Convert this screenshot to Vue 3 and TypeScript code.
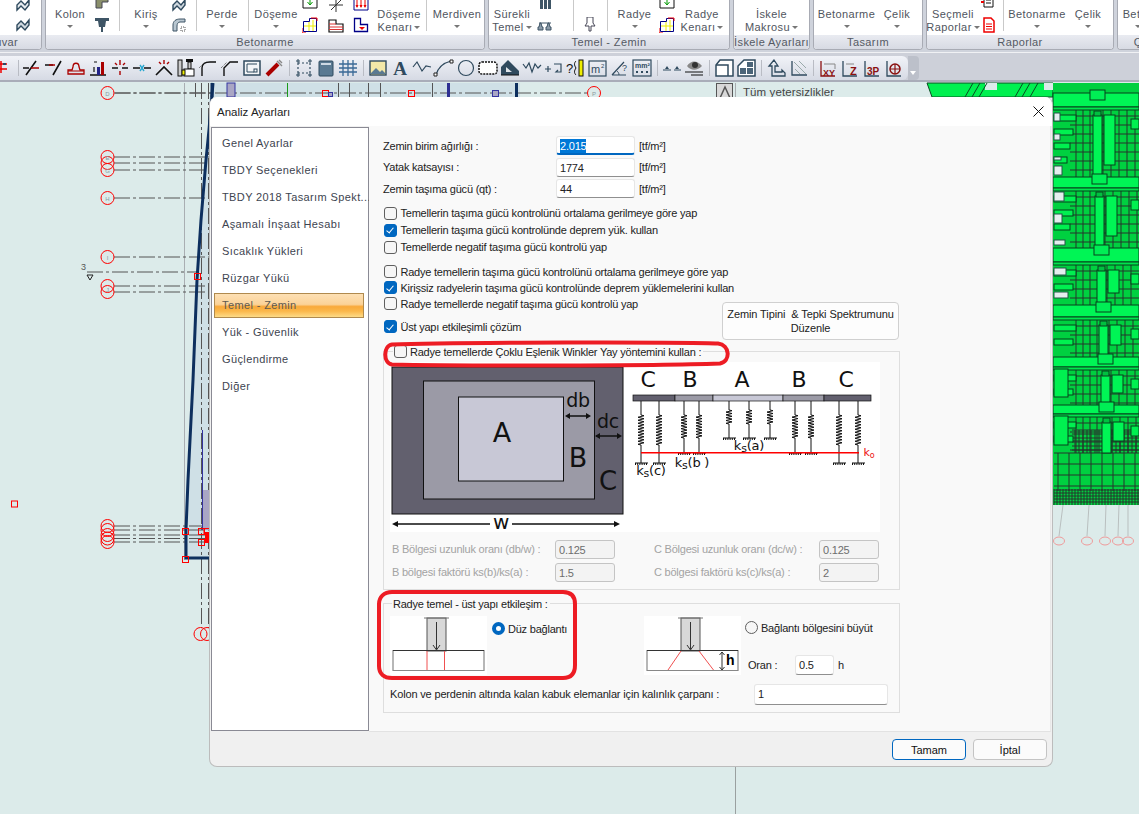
<template>
  <div class="app">
    <!-- ribbon -->
    <div class="ribbon">
      <div v-for="g in groups" :key="g.title" class="group" :style="{ width: g.w + 'px' }">
        <div class="group-body">
          <template v-for="(it, i) in g.items" :key="i">
            <div v-if="it.kind === 'sep'" class="rb-sep" :style="{ width: it.w + 'px' }"></div>
            <div v-else-if="it.kind === 'col'" class="rb-col" :style="{ width: it.w + 'px' }">
              <svg v-for="ic in it.icons" :key="ic" width="16" height="16" viewBox="0 0 16 16" v-html="ribbonIcons[ic]"></svg>
            </div>
            <div v-else class="rb-btn" :style="{ width: it.w + 'px' }">
              <span>{{ it.l1 }}</span>
              <span v-if="it.l2">{{ it.l2 }}<i class="caret inline"></i></span>
              <i v-else class="caret"></i>
            </div>
          </template>
        </div>
        <div class="group-title">{{ g.title }}</div>
      </div>
    </div>

    <!-- toolbar -->
    <div class="toolbar-row">
      <div class="toolbar">
        <template v-for="(t, i) in tools" :key="i">
          <span v-if="t === '|'" class="tb-sep"></span>
          <svg v-else class="tb-icon" width="22" height="20" viewBox="0 0 22 20" v-html="t"></svg>
        </template>
      </div>
      <div class="tb-more"><i></i></div>
    </div>

    <!-- drawing area -->
    <div class="canvas">
      <svg class="plan" width="1139" height="732" viewBox="0 82 1139 732">
        <polygon points="213,83 209,130 206,160 201,220 197,280 193,380 188,480 186,530 186,558 209,558 209,97 520,97 520,83" fill="#cfe0e6" />
        <line x1="184.5" y1="83" x2="184.5" y2="560" stroke="#a9aeb2" />
        <g stroke="#555" stroke-dasharray="16 3 3 3" fill="none">
          <line v-for="y in axisY" :key="y" x1="114" :y1="y" x2="212" :y2="y" />
          <line x1="115" y1="93" x2="588" y2="93" />
          <line x1="87" y1="272" x2="198" y2="272" />
          <line x1="201.5" y1="83" x2="201.5" y2="628" />
          <line x1="208.5" y1="83" x2="208.5" y2="628" />
        </g>
        <g fill="none" stroke="#f00">
          <circle v-for="y in axisY" :key="y" cx="107.5" :cy="y" r="6.5" />
          <circle cx="594" cy="93" r="6.5" />
          <circle cx="200.5" cy="634" r="6.5" />
          <circle cx="207" cy="634" r="6.5" />
        </g>
        <g class="axis-txt">
          <text v-for="a in axisLabels" :key="a.t" x="107.5" :y="a.y + 2.5">{{ a.t }}</text>
          <text x="594" y="95.5">P</text>
        </g>
        <text x="81" y="270" class="lvl">3</text>
        <path d="M87 275h6l-3 5z" fill="none" stroke="#222" />
        <polyline points="213,83 209,130 206,160 201,220 197,280 193,380 188,480 186,530 186,558 209,558" fill="none" stroke="#0d2f5e" stroke-width="3" />
        <rect x="203" y="490" width="6" height="40" fill="#a9a6c4" />
        <line x1="202.5" y1="430" x2="202.5" y2="530" stroke="#3534a0" />
        <rect x="205" y="532" width="4" height="11" fill="#f00" />
        <g fill="none" stroke="#f00" stroke-width="1">
          <rect v-for="s in redSquares" :key="s[0] + '-' + s[1]" :x="s[0] - 3" :y="s[1] - 3" width="6" height="6" />
        </g>
        <!-- strip above the dialog -->
        <rect x="210.5" y="83" width="3" height="14" fill="#0d2f5e" />
        <rect x="227" y="83" width="8" height="14" fill="#a9a6c4" stroke="#3534a0" />
        <rect x="287" y="83" width="1" height="14" fill="#1a9a1a" />
        <line v-for="x in stripX" :key="x" :x1="x" y1="83" :x2="x" y2="97" stroke="#555" />
        <rect x="322.5" y="90.5" width="6" height="6" fill="none" stroke="#f00" />
        <rect x="408.5" y="90.5" width="6" height="6" fill="none" stroke="#f00" />
        <rect x="328.5" y="92.5" width="4" height="4" fill="#a9a6c4" stroke="#3534a0" />
        <rect x="447" y="83" width="3" height="14" fill="#2e3092" />
        <rect x="492.5" y="90.5" width="6" height="6" fill="#a9a6c4" stroke="#3534a0" />
        <rect x="515" y="83" width="3" height="14" fill="#0d2f5e" />
        <rect x="11.5" y="501" width="6" height="6" fill="none" stroke="#f00" />
        <line x1="735.5" y1="767" x2="735.5" y2="814" stroke="#9aa0a0" />
        <!-- tall structure on the right -->
        <g>
          <polygon points="927,83 1053,83 1053,97 932,97" fill="#00f050" stroke="#0a4a22" />
          <rect x="985" y="83" width="12" height="7" fill="#dcebea" />
          <rect x="1044" y="83" width="9" height="7" fill="#dcebea" />
          <line v-for="x in [965, 972, 979, 1015, 1022, 1030]" :key="x" :x1="x" y1="97" :x2="x + 8" y2="83" stroke="#0a4a22" />
          <rect x="1053" y="83" width="86" height="422" fill="#00d040" />
          <g stroke="#26352c" stroke-width="1">
            <line v-for="l in meshLines" :key="l.k" :x1="l.x1" :y1="l.y1" :x2="l.x2" :y2="l.y2" />
          </g>
          <rect v-for="b in solids" :key="b.k" :x="b.x" :y="b.y" :width="b.w" :height="b.h" :fill="b.f" stroke="#07401d" />
          <rect v-for="h in holes" :key="h[1]" x="1054" :y="h[1]" :width="h[0]" :height="h[2]" fill="#e4eeee" stroke="#254" />
        </g>
        <g stroke="#b9bfbf">
          <line x1="1063" y1="505" x2="1059" y2="536" />
          <line x1="1089" y1="505" x2="1087" y2="536" />
          <line x1="1106" y1="505" x2="1105" y2="536" />
          <line x1="1119" y1="505" x2="1118" y2="536" />
          <line x1="1128" y1="505" x2="1128" y2="536" />
        </g>
        <g fill="none" stroke="#ef9a9a">
          <ellipse v-for="x in [1059, 1087, 1105, 1118, 1128]" :key="x" :cx="x" cy="541" rx="5.5" ry="4" />
        </g>
      </svg>
      <div class="up-box"><svg width="16" height="14" viewBox="0 0 16 14"><path d="M3 14 8 3l5 11" fill="none" stroke="#555" stroke-width="1.5" /></svg></div>
      <div class="side-title">Tüm yetersizlikler</div>
    </div>

    <!-- dialog -->
    <div class="dialog">
      <div class="dlg-title">
        <span>Analiz Ayarları</span>
        <svg width="11" height="11" viewBox="0 0 11 11"><path d="M.5.5l10 10M10.5.5l-10 10" stroke="#111" stroke-width="1" /></svg>
      </div>
      <div class="dlg-body">
        <ul class="nav">
          <li v-for="n in navItems" :key="n" :class="{ active: n === 'Temel - Zemin' }">{{ n }}</li>
        </ul>
        <div class="pane">
          <div v-for="(r, i) in soilRows" :key="r.label" class="soil-row">
            <span class="soil-label">{{ r.label }}</span>
            <div class="field soil-field" :class="{ focused: i === 0 }">
              <span :class="{ sel: i === 0 }">{{ r.value }}</span>
            </div>
            <span>[tf/m²]</span>
          </div>

          <div class="checks first">
            <label v-for="c in checks1" :key="c.t" class="check tall"><i class="box" :class="{ on: c.on }"></i>{{ c.t }}</label>
          </div>
          <div class="checks second">
            <label v-for="c in checks2" :key="c.t" class="check"><i class="box" :class="{ on: c.on }"></i>{{ c.t }}</label>
          </div>

          <div class="with-button">
            <div>
              <label class="check"><i class="box"></i>Radye temellerde negatif taşıma gücü kontrolü yap</label>
              <label class="check last"><i class="box on"></i>Üst yapı etkileşimli çözüm</label>
            </div>
            <button class="spectrum">Zemin Tipini &nbsp;&amp; Tepki Spektrumunu<br />Düzenle</button>
          </div>

          <div class="frame winkler">
            <div class="legend"><i class="box"></i>Radye temellerde Çoklu Eşlenik Winkler Yay yöntemini kullan :</div>
            <svg class="zones" width="490" height="170" viewBox="391 362 490 170">
              <rect x="391" y="362" width="490" height="170" fill="#fff" />
              <rect x="393" y="367" width="231" height="147" fill="#62606e" stroke="#111" />
              <rect x="424.5" y="381" width="171" height="118" fill="#9b9aa6" stroke="#111" />
              <rect x="459.5" y="397" width="105" height="84" fill="#c8c8d6" stroke="#111" />
              <g class="dia" fill="#111">
                <text x="503" y="442" font-size="27">A</text>
                <text x="579" y="467" font-size="27">B</text>
                <text x="609" y="490" font-size="26">C</text>
                <text x="579" y="407" font-size="19">db</text>
                <text x="609" y="428" font-size="19">dc</text>
                <text x="502" y="529" font-size="20">w</text>
                <text x="649" y="387" font-size="22">C</text>
                <text x="691" y="387" font-size="22">B</text>
                <text x="743" y="387" font-size="22">A</text>
                <text x="800" y="387" font-size="22">B</text>
                <text x="847" y="387" font-size="22">C</text>
                <text x="652" y="475" font-size="13">k<tspan font-size="11" dy="2">s</tspan><tspan dy="-2">(c)</tspan></text>
                <text x="693" y="467" font-size="13">k<tspan font-size="11" dy="2">s</tspan><tspan dy="-2">(b )</tspan></text>
                <text x="750" y="450" font-size="13">k<tspan font-size="11" dy="2">s</tspan><tspan dy="-2">(a)</tspan></text>
                <text x="870" y="456" font-size="11" fill="#e11">k<tspan font-size="8" dy="2">o</tspan></text>
              </g>
              <g stroke="#111" stroke-width="1.5" fill="#111">
                <path d="M568 416h22M597 436h24M398 524h93M513 524h106" fill="none" />
                <path d="M566 416l5-3v6zM592 416l-5-3v6zM596 436l5-3v6zM623 436l-5-3v6zM393 524l6-3v6zM621 524l-6-3v6z" stroke="none" />
              </g>
              <rect x="634" y="395" width="42" height="6" fill="#62606e" stroke="#111" stroke-width=".7" />
              <rect x="676" y="395" width="38" height="6" fill="#9b9aa6" stroke="#111" stroke-width=".7" />
              <rect x="714" y="395" width="70" height="6" fill="#c8c8d6" stroke="#111" stroke-width=".7" />
              <rect x="784" y="395" width="41" height="6" fill="#9b9aa6" stroke="#111" stroke-width=".7" />
              <rect x="825" y="395" width="47" height="6" fill="#62606e" stroke="#111" stroke-width=".7" />
              <g fill="none" stroke="#111" stroke-width="1">
                <path v-for="s in springs" :key="s.x" :d="s.d" />
              </g>
              <rect x="642" y="452" width="218" height="1.5" fill="#f00" />
            </svg>
            <div class="ratio-grid">
              <div v-for="r in ratios" :key="r.label" class="ratio">
                <span class="ratio-label">{{ r.label }}</span>
                <div class="field off">{{ r.value }}</div>
              </div>
            </div>
          </div>

          <div class="frame interaction">
            <div class="legend plain">Radye temel - üst yapı etkileşim :</div>
            <div class="link-row">
              <svg width="97" height="59" viewBox="391 616 97 59">
                <rect x="391" y="616" width="97" height="59" fill="#fff" />
                <rect x="428" y="618" width="19" height="33" fill="#d8d8d8" stroke="#555" />
                <line x1="425" y1="618" x2="450" y2="618" stroke="#777" />
                <path d="M437.5 622v27M434 645l3.5 5 3.5-5" fill="none" stroke="#333" />
                <path d="M394 650v21M485 650v21M394 670.5h91" fill="none" stroke="#888" stroke-width="1.2" />
                <line x1="394" y1="650.5" x2="485" y2="650.5" stroke="#333" stroke-width="1.2" />
                <path d="M428 651v19M445.5 651v19" stroke="#f05050" />
              </svg>
              <label class="radio-row first"><i class="radio on"></i>Düz bağlantı</label>
              <svg class="pic2" width="97" height="59" viewBox="645 616 97 59">
                <rect x="645" y="616" width="97" height="59" fill="#fff" />
                <rect x="682" y="618" width="19" height="33" fill="#d8d8d8" stroke="#555" />
                <line x1="679" y1="618" x2="704" y2="618" stroke="#777" />
                <path d="M691.5 622v27M688 645l3.5 5 3.5-5" fill="none" stroke="#333" />
                <path d="M648 650v21M739 650v21M648 670.5h91" fill="none" stroke="#888" stroke-width="1.2" />
                <line x1="648" y1="650.5" x2="739" y2="650.5" stroke="#333" stroke-width="1.2" />
                <path d="M682 651l-13 19M700 651l14.5 19" stroke="#f05050" fill="none" />
                <path d="M723 652v18M720.5 655l2.5-3 2.5 3M720.5 667l2.5 3 2.5-3" stroke="#333" fill="none" />
                <text x="727" y="665" class="h-mark">h</text>
              </svg>
              <div class="link-right">
                <label class="radio-row"><i class="radio"></i>Bağlantı bölgesini büyüt</label>
                <div class="oran">
                  <span class="oran-label">Oran :</span>
                  <div class="field oran-field">0.5</div>
                  <span>h</span>
                </div>
              </div>
            </div>
            <div class="thick-row">
              <span>Kolon ve perdenin altında kalan kabuk elemanlar için kalınlık çarpanı :</span>
              <div class="field thick-field">1</div>
            </div>
          </div>
        </div>
      </div>
      <div class="dlg-foot">
        <button class="btn primary">Tamam</button>
        <button class="btn">İptal</button>
      </div>
    </div>

    <!-- red marks drawn over the screenshot -->
    <svg class="marks" width="1139" height="814" viewBox="0 0 1139 814">
      <g fill="none" stroke="#ed1c24" stroke-width="4">
        <path d="M392 344.5C450 342 690 342 718 343.5 730 345 731 361 720 363.5 650 366 450 366 392 364.5 383 363 383 346 392 344.5Z" />
        <path d="M392 592H563C571 592 575 596 575 604V665C575 674 571 678 563 678H392C384 678 379 674 379 666V604C379 597 384 592 392 592Z" />
      </g>
    </svg>
  </div>
</template>

<script setup lang="ts">
type RibbonItem =
  | { kind: "sep"; w: number }
  | { kind: "col"; w: number; icons: string[] }
  | { kind: "btn"; w: number; l1: string; l2?: string };

interface RibbonGroup {
  title: string;
  w: number;
  items: RibbonItem[];
}

const btn = (w: number, l1: string, l2?: string): RibbonItem => ({ kind: "btn", w, l1, l2 });
const sep = (w: number): RibbonItem => ({ kind: "sep", w });
const col = (w: number, ...icons: string[]): RibbonItem => ({ kind: "col", w, icons });

const ribbonIcons: Record<string, string> = {
  wave: '<path d="M2 13V8l4-4 4 4 4-5v5l-4 5-4-4-4 4z" fill="#cfd8df" stroke="#2f4a5e" stroke-width="1.4"/>',
  wave2: '<path d="M2 13V8l4-4 4 4 4-5v5l-4 5-4-4-4 4z" fill="#e6ebef" stroke="#2f4a5e" stroke-width="1.4"/>',
  block: '<path d="M2 0h12v5H8v6H2z" fill="#8a8f6b" stroke="#445"/>',
  funnel: '<path d="M1 1h14v3h-3l-1 6H9v5H7v-5H5L4 4H1z" fill="#3e5566"/>',
  curve: '<path d="M2 14V8c0-4 3-6 7-6h5v3H9c-2 0-3 2-3 4v5z" fill="#b8c6d0" stroke="#3e5566"/><path d="M10 10h4v4h-4z" fill="none" stroke="#555" stroke-dasharray="1 1"/>',
  boxArrow: '<path d="M1 0h14v11H1z" fill="#fff" stroke="#111"/><path d="M8 1v6M5.5 5 8 8l2.5-3" stroke="#090" fill="none"/>',
  lYellow: '<path d="M1.5 4.5h6v-3h7v13h-13z" fill="#fff" stroke="#008"/><path d="M2 9h12M7 5v9M11 3v11" stroke="#ee0"/><path d="M9 1h6v3M0 11v5h4" stroke="#e00" fill="none"/>',
  cross: '<path d="M1 8h14M8 0v15M3 13 13 3" stroke="#333" fill="none"/>',
  steps: '<path d="M1 15V3h7v4h7v8z" fill="#fff" stroke="#111" stroke-width="1.2"/><path d="M1 7h7M1 10h14M1 12.5h14" stroke="#d33"/>',
  arrowsRed: '<path d="M1 0h14v13H1z" fill="#fff" stroke="#008"/><path d="M4 2v8M8 2v8M12 2v8" stroke="#e00"/><path d="M2.5 8 4 11l1.5-3M6.5 8 8 11l1.5-3M10.5 8l1.5 3 1.5-3" fill="#e00"/>',
  lRed: '<path d="M1.5 1.5h6v6h7v7h-13z" fill="#fff" stroke="#008" stroke-width="1.3"/><path d="M6 10h6l-3 3z" fill="#e00"/>',
  bars: '<path d="M3 0h3v12H3zM7 0h3v12H7zM11 0h3v12h-3z" fill="#3e5566"/>',
  pads: '<path d="M1 13h5V10H5L4 6H3l-1 4H1zM9 13h5V10h-1l-1-4h-1l-1 4H9z" fill="#8a9aa8" stroke="#3e5566"/><path d="M2 6h12" stroke="#3e5566"/>',
  pin: '<path d="M5 0h6v6l2 3H9v5H7V9H3l2-3z" fill="#fff" stroke="#445"/>',
  docGrid: '<path d="M3 0h9v10H3z" fill="#fff" stroke="#111"/><path d="M5 3h5M5 6h5" stroke="#111"/><path d="M0 2h3M0 5h3" stroke="#e00" stroke-width="2"/>',
  docRed: '<path d="M3 1h7l3 3v11H3z" fill="#fff" stroke="#e00" stroke-width="1.5"/><path d="M5 7h6M5 9.5h6M5 12h6" stroke="#e00"/>',
};

const groups: RibbonGroup[] = [
  // this group starts left of the window, only its end shows
  { title: "Duvar", w: 79, items: [col(118, "wave2", "wave")] },
  {
    title: "Betonarme",
    w: 440,
    items: [
      btn(48, "Kolon"), col(16, "block", "funnel"), sep(9),
      btn(52, "Kiriş"), col(14, "wave", "curve"), sep(10),
      btn(50, "Perde"), sep(1),
      btn(54, "Döşeme"), col(14, "boxArrow", "lYellow"), col(38, "cross", "steps"), col(12, "arrowsRed", "lRed"),
      col(6), btn(52, "Döşeme", "Kenarı"), sep(1),
      btn(60, "Merdiven"),
    ],
  },
  {
    title: "Temel - Zemin",
    w: 242,
    items: [
      btn(46, "Sürekli", "Temel"), col(20, "bars", "pads"), sep(18),
      col(32, "pin"), sep(1),
      btn(53, "Radye"), col(12, "boxArrow", "lYellow"), btn(58, "Radye", "Kenarı"),
    ],
  },
  { title: "İskele Ayarları", w: 77, items: [btn(75, "İskele", "Makrosu")] },
  { title: "Tasarım", w: 110, items: [btn(65, "Betonarme"), btn(36, "Çelik")] },
  {
    title: "Raporlar",
    w: 188,
    items: [
      btn(52, "Seçmeli", "Raporlar"), col(20, "docGrid", "docRed"), sep(4),
      btn(66, "Betonarme"), btn(36, "Çelik"),
    ],
  },
  { title: "Çelik", w: 60, items: [btn(40, "Beton")] },
];

const L = (d: string, c = "#111", w = 1.2) => `<path d="${d}" fill="none" stroke="${c}" stroke-width="${w}"/>`;

const tools: string[] = [
  L("M3 3v12M7 3v12M1 6h12M1 11h12", "#e00", 1.5) + L("M1 6h3M9 6h3", "#2a4a66", 2),
  "|",
  L("M5 17 15 3M2 10h6", "#111", 1.6) + L("M10 10h8", "#a00", 1.6),
  L("M10 17 18 3M2 7h8", "#111", 1.6) + L("M6 7h6", "#a00", 1.6),
  L("M3 16h16v-4h-4l-1-3c0-5-6-5-6 0l-1 3H3z", "#a00", 1.3) + L("M3 13h16", "#a00", 1),
  L("M3 17h16", "#111", 1.5) + '<rect x="14" y="4" width="3" height="13" fill="#a00"/><rect x="10" y="9" width="3" height="8" fill="#228"/>' + L("M7 9v5M7 4h3", "#111", 1.2),
  L("M11 2v5M11 13v4M6 5l2 2M16 5l-2 2", "#a00", 1.4) + L("M3 10h6M13 10h6", "#111", 1.6),
  L("M2 10h7M13 10h7", "#111", 1.5) + L("M9 7l4 6M13 7l-4 6", "#2aa8d0", 1.4),
  L("M3 17 11 9l8 8", "#111", 1.6) + L("M11 6V2M6 4l2 2M16 4l-2 2", "#a00", 1.4),
  '<rect x="3" y="2" width="4" height="16" fill="#ccc" stroke="#111"/><rect x="11" y="1" width="7" height="3" fill="#111"/><rect x="13" y="4" width="3" height="7" fill="#ccc" stroke="#111"/><rect x="9" y="11" width="10" height="7" fill="#fff" stroke="#111"/><rect x="7" y="12" width="3" height="5" fill="#ee0" stroke="#111"/>',
  L("M5 18V10c0-4 3-6 8-6h6", "#111", 1.4) + '<path d="M2 10 8 4" stroke="#555" stroke-dasharray="1 1"/>',
  L("M5 18V10l6-6h8", "#111", 1.4) + '<path d="M2 10 8 4" stroke="#555" stroke-dasharray="1 1"/>',
  '<rect x="3" y="3" width="16" height="14" fill="#f4f6f8" stroke="#2f4a5e" stroke-width="1.5"/><rect x="13" y="11" width="3" height="3" fill="none" stroke="#2f4a5e"/><path d="M6 6v8h7M6 6h10" stroke="#2f4a5e" fill="none"/>',
  L("M4 17 15 6", "#a00", 4) + L("M14 3l5 5M16 2l3 3", "#888", 1.4),
  "|",
  '<path d="M5 5h12M5 15h12M5 5v10M17 5v10" fill="none" stroke="#2f4a5e" stroke-dasharray="2 2" stroke-width="1.2"/>' + L("M3 3h4M5 1v4M15 3h4M17 1v4M3 17h4M5 15v4M15 17h4M17 15v4", "#2f4a5e", 1),
  '<rect x="4" y="3" width="14" height="15" rx="1" fill="#5a7a92" stroke="#2f4a5e"/><rect x="6" y="5" width="10" height="2" fill="#cdd9e3"/>',
  L("M6 2v16M11 2v16M16 2v16M2 6h18M2 10h18M2 14h18", "#3a6a96", 1.3),
  "|",
  '<rect x="3" y="3" width="16" height="14" fill="#f3e8a8" stroke="#2f4a5e" stroke-width="1.4"/><path d="M3 16 9 10l4 4 2-2 4 4z" fill="#5a7a92"/>',
  '<text x="11" y="17" text-anchor="middle" font-family="Liberation Serif,serif" font-weight="700" font-size="19" fill="#2f4a5e">A</text>',
  L("M2 9 6 4l5 9 4-5 5 1", "#2f4a5e", 1.2),
  L("M3 17C5 9 10 5 18 3", "#2f4a5e", 1.2) + '<path d="M1 15h3v3H1zM17 2h3v3h-3z" fill="#fff" stroke="#222"/>',
  '<circle cx="11" cy="10" r="7.5" fill="none" stroke="#2f4a5e" stroke-width="1.2"/>',
  '<path d="M5 4h12c2 0 3 2 3 3v6c0 2-1 3-3 3H5c-2 0-3-1-3-3V7c0-1 1-3 3-3z" fill="#fff" stroke="#111" stroke-width="1.5" stroke-dasharray="2 1"/>',
  '<path d="M2 17V9l7-7 11 11v4z" fill="#2f4a5e"/><path d="M7 14V9l6 5z" fill="#dfe5ea"/><path d="M2 17h18" stroke="#111"/>',
  L("M2 6l3 4 3-5 3 9 3-8 3 4 3-3", "#2f4a5e", 1.2),
  L("M2 11h6M5 8v6M11 6h7v8h-5l2-2", "#2f4a5e", 1.2),
  '<text x="1" y="15" font-family="Liberation Sans,sans-serif" font-size="13" fill="#111">?</text>' + L("M11 3c-2 2-2 4 0 7-2 3-2 5 0 7", "#111", 1) + '<rect x="14" y="2" width="4" height="16" fill="#ee0" stroke="#111"/>',
  '<rect x="2" y="3" width="17" height="15" fill="none" stroke="#2f4a5e" stroke-width="1.2"/><text x="4" y="15" font-family="Liberation Sans,sans-serif" font-size="11" fill="#2f4a5e">m</text><text x="14" y="10" font-family="Liberation Sans,sans-serif" font-size="6" fill="#2f4a5e">2</text>',
  L("M3 17 15 4M3 17h14", "#2f4a5e", 1.2) + L("M10 17c0-2-1-3-2-4", "#2f4a5e", 1) + '<text x="13" y="13" font-family="Liberation Sans,sans-serif" font-size="9" fill="#2f4a5e">?</text>',
  '<rect x="2" y="2" width="18" height="16" fill="none" stroke="#2f4a5e" stroke-width="1.2"/><text x="4" y="10" font-family="Liberation Sans,sans-serif" font-weight="700" font-size="7" fill="#2f4a5e">mm²</text><path d="M5 14h2M10 14h2M15 14h2" stroke="#2f4a5e" stroke-width="2"/>',
  "|",
  L("M2 12h8M13 12h7", "#2f4a5e", 1.2) + '<path d="M4 11l2-3 2 3zM14 11l2-3 2 3z" fill="#2f4a5e"/>',
  '<path d="M4 8c4-6 10-6 15 0-5 5-11 5-15 0z" fill="#888"/><circle cx="12" cy="7" r="3" fill="#333"/>' + L("M2 14h18", "#111", 1.2) + L("M8 17h12", "#111", 1.2),
  "|",
  '<path d="M7 2h13v16H3V7z" fill="#fff" stroke="#2f4a5e" stroke-width="1.5"/><path d="M3 7h12v11" fill="none" stroke="#2f4a5e" stroke-width="1.5"/>',
  '<path d="M3 8 9 2h11v16H3z" fill="#fff" stroke="#2f4a5e" stroke-width="1.5"/><rect x="5" y="10" width="6" height="6" fill="#4a6478"/><rect x="12" y="10" width="6" height="6" fill="#4a6478"/><rect x="12" y="4" width="6" height="5" fill="#4a6478"/>',
  "|",
  L("M9 2 4 8h3v10h13v-3l-3-3v2h-7V8h3z", "#2f4a5e", 1.3),
  L("M5 3v14h15", "#2f4a5e", 1.3) + L("M7 4l12 12M12 3l7 7M8 11l5 5", "#9aa", 1),
  "|",
  L("M4 3v15h14", "#8a1010", 1.3) + '<text x="6" y="18" font-family="Liberation Sans,sans-serif" font-weight="700" font-size="9" fill="#8a1010">XY</text>' + L("M7 6h11v5", "#888", 1),
  L("M4 3v15h14", "#2f4a5e", 1.3) + '<text x="11" y="17" font-family="Liberation Sans,sans-serif" font-weight="700" font-size="11" fill="#8a1010">Z</text>' + L("M7 6h8", "#888", 1),
  L("M4 3v15h14", "#2f4a5e", 1.3) + '<text x="6" y="17" font-family="Liberation Sans,sans-serif" font-weight="700" font-size="10" fill="#8a1010">3P</text>',
  L("M4 3v15h14", "#2f4a5e", 1.3) + '<circle cx="12" cy="11" r="5" fill="none" stroke="#8a1010" stroke-width="1.5"/>' + L("M7 11h10M12 6v10", "#8a1010", 1.2),
];

const axisY = [93, 157, 163, 170, 198, 257, 286, 292, 526, 530, 535, 538.5, 542];
const axisLabels = [
  { t: "D", y: 93 },
  { t: "E", y: 157 },
  { t: "G", y: 170 },
  { t: "H", y: 198 },
  { t: "I", y: 257 },
  { t: "J", y: 289 },
];
const redSquares = [
  [197.5, 276.5],
  [185.5, 531.5],
  [185.5, 559.5],
  [201.5, 531.5],
  [201.5, 542.5],
  [207, 531.5],
];
const stripX = [195.5, 201.5, 208.5, 338.5, 349.5, 368.5, 380.5, 432.5];

// the green frame is repetitive, so it is generated floor by floor
const floors = [
  { top: 93, bottom: 107, cx: 1097 },
  { top: 177, bottom: 188, cx: 1099 },
  { top: 248, bottom: 262, cx: 1101 },
  { top: 305, bottom: 317, cx: 1103 },
  { top: 357, bottom: 367, cx: 1105 },
  { top: 405, bottom: 414, cx: 1106 },
];
const meshLines: { k: string; x1: number; y1: number; x2: number; y2: number }[] = [];
const solids: { k: string; x: number; y: number; w: number; h: number; f: string }[] = [];
const addLine = (x1: number, y1: number, x2: number, y2: number) =>
  meshLines.push({ k: `${x1}-${y1}-${x2}-${y2}`, x1, y1, x2, y2 });

floors.forEach((f, i) => {
  const next = i < floors.length - 1 ? floors[i + 1].top : 453;
  const h = next - f.bottom;
  for (let x = 1076; x < f.cx - 5; x += 7) addLine(x, f.bottom, x, next);
  for (let x = f.cx + 6; x < 1139; x += 8) addLine(x, f.bottom, x, next);
  for (let y = f.bottom + 9; y < next; y += 9) addLine(1070, y, 1139, y);
  solids.push({ k: `b${i}`, x: 1053, y: f.top, w: 86, h: f.bottom - f.top, f: "#00f555" });
  solids.push({ k: `e${i}`, x: 1053, y: f.bottom, w: 86, h: 3, f: "#00e44c" });
  solids.push({ k: `c${i}`, x: f.cx - 4, y: f.bottom + 8, w: 9, h: h - 8, f: "#00f555" });
  solids.push({ k: `n${i}`, x: f.cx - 3, y: f.bottom + 4, w: 7, h: 5, f: "#00c040" });
  solids.push({ k: `d${i}`, x: f.cx - 7, y: f.top - 3, w: 15, h: 10, f: "#00ee55" });
  solids.push({ k: `w${i}`, x: f.cx + 7, y: f.bottom + 8, w: 11, h: Math.max(14, h - 20), f: "#00f555" });
  solids.push({ k: `r${i}`, x: 1131, y: f.bottom + 12, w: 8, h: 10, f: "#00f050" });
  // floor slabs on the left edge
  for (let s = 0; s * 14 + 20 < h; s++) {
    solids.push({ k: `s${i}-${s}`, x: 1054, y: f.bottom + 8 + s * 14, w: 22 - s * 3, h: 6, f: "#00f050" });
  }
  if (i >= 4) solids.push({ k: `p${i}`, x: 1054, y: f.bottom + 2, w: 14, h: h - 10, f: "#00f050" });
});
for (let x = 1058; x < 1139; x += 11) addLine(x, 453, x, 491);
for (let y = 453; y < 491; y += 11) addLine(1054, y, 1139, y);
for (let x = 1054; x < 1139; x += 3) addLine(x, 489, x, 505);
for (let y = 490; y < 505; y += 3) addLine(1054, y, 1139, y);
for (let x = 1075; x < 1100; x += 4) addLine(x, 430, x, 453);
for (let x = 1112; x < 1139; x += 4) addLine(x, 430, x, 453);
for (let y = 430; y < 453; y += 4) addLine(1072, y, 1139, y);

const holes: [number, number, number][] = [
  [6, 113, 8],
  [6, 134, 6],
  [7, 157, 3],
  [8, 166, 9],
  [10, 192, 9],
  [8, 214, 9],
  [11, 240, 5],
  [12, 268, 7],
  [14, 292, 6],
];

const navItems = [
  "Genel Ayarlar",
  "TBDY Seçenekleri",
  "TBDY 2018 Tasarım Spekt...",
  "Aşamalı İnşaat Hesabı",
  "Sıcaklık Yükleri",
  "Rüzgar Yükü",
  "Temel - Zemin",
  "Yük - Güvenlik",
  "Güçlendirme",
  "Diğer",
];

const soilRows = [
  { label: "Zemin birim ağırlığı :", value: "2.015" },
  { label: "Yatak katsayısı :", value: "1774" },
  { label: "Zemin taşıma gücü (qt) :", value: "44" },
];

const checks1 = [
  { t: "Temellerin taşıma gücü kontrolünü ortalama gerilmeye göre yap", on: false },
  { t: "Temellerin taşıma gücü kontrolünde deprem yük. kullan", on: true },
  { t: "Temellerde negatif taşıma gücü kontrolü yap", on: false },
];
const checks2 = [
  { t: "Radye temellerin taşıma gücü kontrolünü ortalama gerilmeye göre yap", on: false },
  { t: "Kirişsiz radyelerin taşıma gücü kontrolünde deprem yüklemelerini kullan", on: true },
];

const ratios = [
  { label: "B Bölgesi uzunluk oranı (db/w) :", value: "0.125" },
  { label: "C Bölgesi uzunluk oranı (dc/w) :", value: "0.125" },
  { label: "B bölgesi faktörü ks(b)/ks(a) :", value: "1.5" },
  { label: "C bölgesi faktörü ks(c)/ks(a) :", value: "2" },
];

// spring path: straight lead, zigzag coil, straight lead, ground hatch
const spring = (x: number, coilTop: number, coilBottom: number, end: number, turns: number) => {
  let d = `M${x} 401V${coilTop}`;
  const step = (coilBottom - coilTop) / turns;
  for (let i = 0; i < turns; i++) {
    const side = i % 2 === 0 ? 3 : -3;
    d += `L${x + side} ${coilTop + step * (i + 0.5)}`;
  }
  d += `L${x} ${coilBottom}V${end}M${x - 6} ${end}h13`;
  for (let t = 0; t < 6; t++) d += `M${x - 5.5 + t * 2.2} ${end}v2`;
  return d;
};
const springs = [
  ...[642, 660, 840, 859].map((x) => ({ x, d: spring(x, 415, 445, 463, 20) })),
  ...[685, 700, 796, 812].map((x) => ({ x, d: spring(x, 415, 438, 453, 16) })),
  ...[730, 750, 771].map((x) => ({ x, d: spring(x, 410, 424, 438, 10) })),
];
</script>

<style scoped>
.app {
  position: relative;
  width: 1139px;
  height: 814px;
  overflow: hidden;
  display: flex;
  flex-direction: column;
  background: #d4d7df;
  font-family: "Liberation Sans", Arial, sans-serif;
  font-size: 11px;
  color: #222;
}

/* ribbon */
.ribbon {
  display: flex;
  gap: 3px;
  height: 53px;
  flex: none;
  margin-left: -1px;
  background: #cfd3dc;
  border-bottom: 1px solid #f0f1f4;
  box-sizing: border-box;
}
.group {
  flex: none;
  height: 50px;
  display: flex;
  flex-direction: column;
  background: #fff;
  border: 1px solid #a8abb4;
  border-top: none;
  border-radius: 0 0 4px 4px;
  box-sizing: border-box;
  overflow: hidden;
}
.group:first-child {
  margin-left: -36px;
}
.group-body {
  flex: none;
  height: 35px;
  display: flex;
  overflow: hidden;
}
.group-title {
  flex: 1;
  text-align: center;
  line-height: 15px;
  color: #555a64;
  letter-spacing: 0.4px;
  white-space: nowrap;
  background: linear-gradient(#e9ebf1, #d6d9e2);
}
.rb-sep {
  flex: none;
  height: 31px;
  border-right: 1px solid #c9c9c9;
  box-sizing: content-box;
}
.rb-col {
  flex: none;
  height: 33px;
  display: flex;
  flex-direction: column;
  align-items: center;
  justify-content: flex-end;
  gap: 4px;
}
.rb-col svg {
  flex: none;
}
.rb-btn {
  flex: none;
  display: flex;
  flex-direction: column;
  align-items: center;
  padding-top: 8px;
  line-height: 13px;
  color: #50555e;
  letter-spacing: 0.4px;
  white-space: nowrap;
  box-sizing: border-box;
}
.caret {
  display: block;
  width: 0;
  height: 0;
  margin-top: 4px;
  border: 3px solid transparent;
  border-top: 3px solid #777;
  border-bottom: none;
}
.caret.inline {
  display: inline-block;
  margin: 0 0 2px 2px;
}

/* toolbar */
.toolbar-row {
  flex: none;
  display: flex;
  height: 29px;
  padding-top: 3px;
  box-sizing: border-box;
  background: #cdd0d9;
  border-bottom: 2px solid #a9adb9;
}
.toolbar {
  width: 908px;
  height: 24px;
  display: flex;
  align-items: center;
  overflow: hidden;
  background: linear-gradient(#f1f3f8, #d6dae4);
  border-radius: 0 6px 6px 0;
  box-sizing: border-box;
}
.tb-icon {
  flex: none;
}
.tb-icon:first-child {
  margin-left: -6px;
}
.tb-sep {
  flex: none;
  width: 8px;
  height: 16px;
  background: linear-gradient(#b9bcc4, #b9bcc4) center / 1px 100% no-repeat;
}
.tb-sep:nth-child(2) {
  width: 5px;
}
.tb-more {
  width: 11px;
  height: 24px;
  background: #bcc0ca;
  border-radius: 0 4px 4px 0;
  position: relative;
}
.tb-more i {
  position: absolute;
  left: 2px;
  top: 15px;
  border: 3px solid transparent;
  border-top: 4px solid #fff;
  border-bottom: none;
}

/* canvas */
.canvas {
  flex: 1;
  position: relative;
  background: #dcebea;
}
.plan {
  position: absolute;
  left: 0;
  top: 0;
}
.axis-txt text {
  font-size: 6px;
  fill: #8a9aa0;
  text-anchor: middle;
}
.lvl {
  font-size: 9px;
  fill: #555;
}
.up-box {
  position: absolute;
  left: 716px;
  top: 1px;
  width: 17px;
  height: 16px;
  box-sizing: border-box;
  border: 1px solid #555;
  background: #d8d8d8;
  line-height: 0;
}
.side-title {
  position: absolute;
  left: 735px;
  top: 1px;
  width: 192px;
  height: 16px;
  padding: 3px 0 0 7px;
  box-sizing: border-box;
  border-left: 1px solid #a9adb0;
  font-size: 11.5px;
  color: #444;
  letter-spacing: 0.1px;
  white-space: nowrap;
}

/* dialog */
.dialog {
  position: absolute;
  left: 209px;
  top: 97px;
  width: 844px;
  height: 670px;
  display: flex;
  flex-direction: column;
  box-sizing: border-box;
  background: #f0f0f0;
  border: 1px solid #bcbcbc;
  border-top: none;
  border-radius: 8px;
  overflow: hidden;
}
.dlg-title {
  flex: none;
  height: 29px;
  display: flex;
  align-items: center;
  justify-content: space-between;
  padding: 0 8px 0 7px;
  background: #fff;
  font-size: 11.5px;
  color: #222;
}
.dlg-body {
  flex: none;
  height: 606px;
  display: flex;
  padding-left: 1px;
}
.nav {
  flex: none;
  width: 158px;
  height: 604px;
  margin: 1px 0 0;
  padding: 3px 4px 0 2px;
  list-style: none;
  box-sizing: border-box;
  background: #fff;
  border: 1px solid #8a8a94;
}
.nav li {
  height: 25px;
  margin-bottom: 2px;
  padding-left: 8px;
  line-height: 25px;
  letter-spacing: 0.38px;
  color: #3d4450;
  white-space: nowrap;
  box-sizing: border-box;
}
.nav li.active {
  border: 1px solid #b08a4e;
  line-height: 23px;
  padding-left: 7px;
  color: #5f5a50;
  background: linear-gradient(#fde0b4 0%, #fbd298 45%, #f9a93a 55%, #fbb84c 75%, #fddb88 100%);
}
.pane {
  flex: none;
  width: 682px;
  height: 606px;
  padding: 10px 150px 0 14px;
  box-sizing: border-box;
  letter-spacing: -0.22px;
  background: #f9f9f9;
  border-bottom: 1px solid #e2e2e2;
  border-right: 1px solid #e8e8e8;
}
.soil-row {
  display: flex;
  align-items: center;
  height: 19.5px;
  margin-bottom: 2px;
}
.soil-label {
  width: 173px;
}
.field {
  box-sizing: border-box;
  height: 19px;
  padding: 0 3px;
  line-height: 18px;
  background: #fff;
  border: 1px solid #e6e6e6;
  border-bottom-color: #8f8f8f;
  border-radius: 3px;
}
.soil-field {
  width: 79px;
  margin-right: 4px;
}
.field.focused {
  border-bottom: 2px solid #0067c0;
}
.sel {
  background: #0078d7;
  color: #fff;
  padding: 1px 0;
}
.field.off {
  width: 60px;
  background: #f3f3f3;
  border: 1px solid #c4c4c4;
  color: #6d6d6d;
}
.checks.first {
  margin-top: 6px;
}
.checks.second {
  margin-top: 8px;
}
.check {
  display: flex;
  align-items: center;
  height: 16px;
  white-space: nowrap;
}
.check.tall {
  height: 17px;
}
.check.last {
  margin-top: 7px;
}
.box {
  flex: none;
  position: relative;
  width: 13px;
  height: 13px;
  margin: 0 4px 0 0.5px;
  box-sizing: border-box;
  background: #f6f6f6;
  border: 1px solid #5f5f5f;
  border-radius: 3px;
}
.box.on {
  background: #0067c0;
  border-color: #0067c0;
}
.box.on::after {
  content: "";
  position: absolute;
  left: 3px;
  top: 1.5px;
  width: 3px;
  height: 6px;
  border: solid #fff;
  border-width: 0 1px 1px 0;
  transform: rotate(40deg);
}
.with-button {
  display: flex;
  justify-content: space-between;
}
.spectrum {
  width: 177px;
  height: 38px;
  margin: 6px 1px 0 0;
  padding: 0;
  font: inherit;
  letter-spacing: -0.1px;
  color: #222;
  line-height: 14px;
  background: #fdfdfd;
  border: 1px solid #d0d0d0;
  border-radius: 4px;
}
.frame {
  border: 1px solid #dedede;
  box-sizing: border-box;
}
.winkler {
  margin-top: 11px;
  height: 239px;
  padding: 0 6px;
}
.legend {
  display: flex;
  align-items: center;
  width: fit-content;
  height: 16px;
  margin: -8px 0 0 3px;
  padding: 0 2px 0 1px;
  background: #f9f9f9;
  white-space: nowrap;
}
.legend .box {
  margin: 0 3px 0 0;
}
.legend.plain {
  margin-left: 2px;
}
.zones {
  display: block;
  margin-top: 2px;
}
.ratio-grid {
  display: grid;
  grid-template-columns: 264px 225px;
  row-gap: 4px;
  margin-top: 8px;
}
.ratio {
  display: flex;
  align-items: center;
  color: #a3a3a3;
}
.ratio-label {
  width: 163px;
  margin-left: 2px;
  white-space: nowrap;
}
.ratio:nth-child(even) .ratio-label {
  margin-left: 0;
  width: 165px;
}
.interaction {
  margin-top: 13px;
  height: 110px;
  padding: 0 6px;
}
.link-row {
  display: flex;
  height: 59px;
  margin-top: 4px;
}
.link-row svg {
  flex: none;
}
.radio-row {
  display: flex;
  align-items: center;
  height: 16px;
  margin-top: 4px;
  white-space: nowrap;
}
.radio-row.first {
  margin: 5px 0 0 5px;
  width: 152px;
  align-self: flex-start;
}
.radio {
  flex: none;
  width: 13px;
  height: 13px;
  margin-right: 3px;
  box-sizing: border-box;
  border: 1px solid #5f5f5f;
  border-radius: 50%;
  background: #f6f6f6;
}
.radio.on {
  border: 4px solid #0067c0;
  background: #fff;
}
.link-right {
  margin-left: 2px;
}
.link-right .radio-row {
  margin-left: 2px;
}
.oran {
  display: flex;
  align-items: center;
  margin: 19px 0 0 5px;
}
.oran-label {
  width: 47px;
}
.oran-field {
  width: 39px;
  height: 20px;
  margin-right: 4px;
}
.thick-row {
  display: flex;
  align-items: center;
  justify-content: space-between;
  margin-top: 9px;
  padding-right: 5px;
}
.thick-row span {
  letter-spacing: -0.16px;
}
.thick-field {
  width: 134px;
  height: 21px;
}
.h-mark {
  font: 700 14px "Liberation Sans", sans-serif;
}
.dia text {
  font-family: "DejaVu Sans", sans-serif;
  text-anchor: middle;
}
.dlg-foot {
  flex: 1;
  display: flex;
  justify-content: flex-end;
  gap: 7px;
  padding: 7px 5px 0 0;
}
.btn {
  width: 74px;
  height: 21px;
  padding: 0;
  font: inherit;
  color: #111;
  background: #fbfbfb;
  border: 1px solid #c4c4c4;
  border-radius: 4px;
}
.btn.primary {
  border-color: #0067c0;
}
.marks {
  position: absolute;
  left: 0;
  top: 0;
  pointer-events: none;
}
</style>
